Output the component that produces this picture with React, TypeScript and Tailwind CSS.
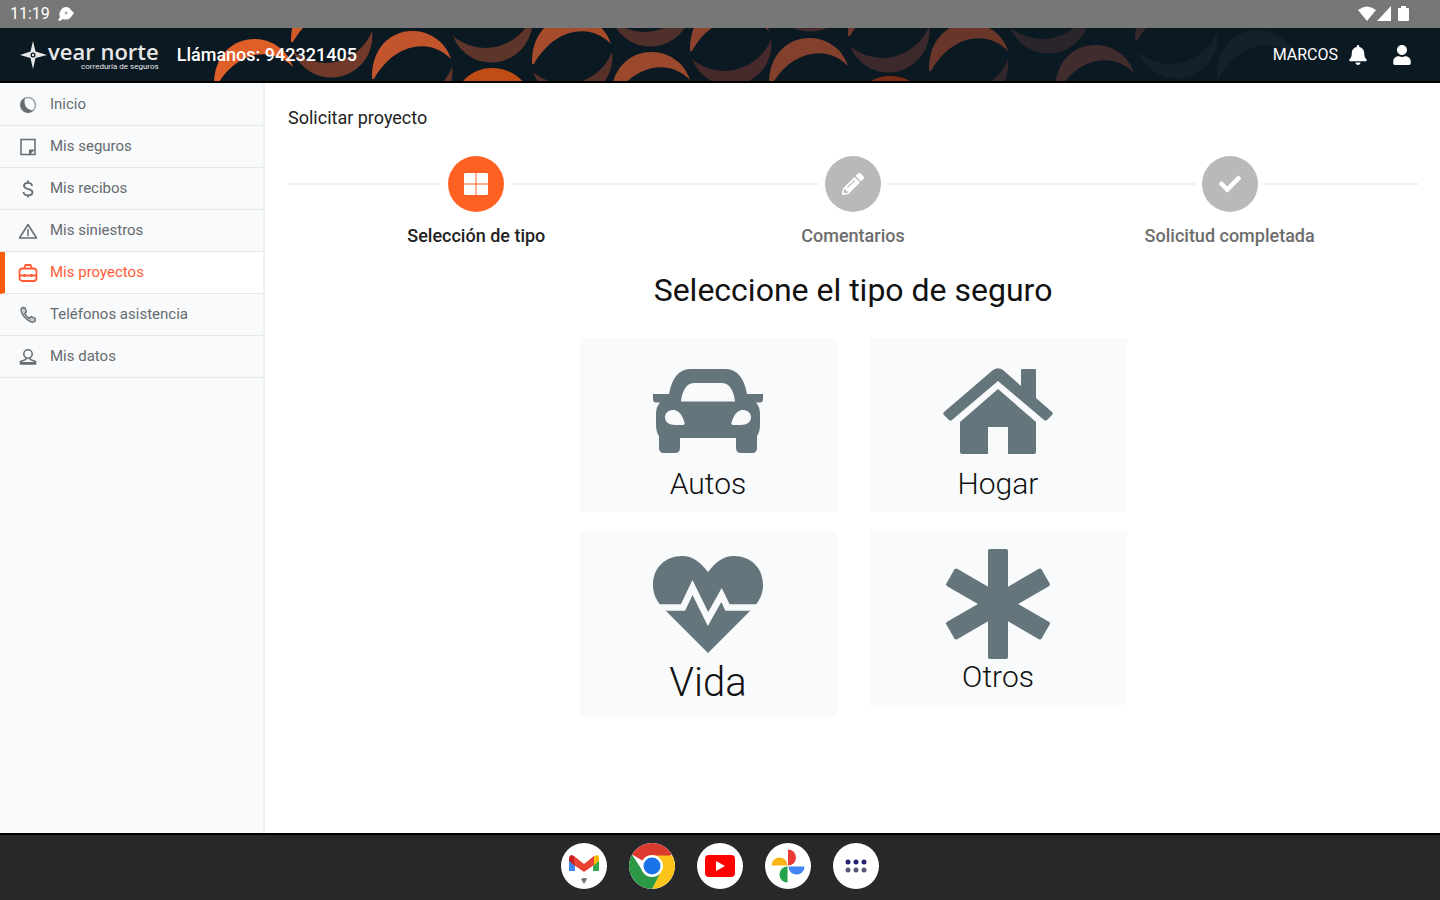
import React from 'react';
import { FaBell, FaUser, FaPencilAlt, FaCheck } from 'react-icons/fa';

interface MenuItem {
  label: string;
  icon: React.ReactNode;
  active?: boolean;
}

interface Step {
  label: string;
  icon: React.ReactNode;
  active?: boolean;
}

interface InsuranceType {
  label: string;
  icon: React.ReactNode;
  large?: boolean;
}

const LineIcon: React.FC<{ children: React.ReactNode }> = ({ children }) => (
  <svg
    viewBox="0 0 20 20"
    className="h-5 w-5 shrink-0"
    fill="none"
    stroke="currentColor"
    strokeWidth="1.5"
    aria-hidden="true"
  >
    {children}
  </svg>
);

const menuItems: MenuItem[] = [
  {
    label: 'Inicio',
    icon: (
      <LineIcon>
        <circle cx="10" cy="10" r="7.5" opacity="0.6" />
        <path d="M7 3C2 5 1 11 4.500 15C7 18.500 12 18.500 15 15.500C9 15 5 10 7 3Z" fill="currentColor" stroke="none" />
      </LineIcon>
    ),
  },
  {
    label: 'Mis seguros',
    icon: (
      <LineIcon>
        <path d="M3 2.500H17V17.500H3Z" />
        <path d="M11 17.500V12.500H17L12 17.500Z" fill="currentColor" stroke="none" />
      </LineIcon>
    ),
  },
  {
    label: 'Mis recibos',
    icon: (
      <LineIcon>
        <path d="M14 7C14 5 12.300 3.800 10 3.800S6 5 6 6.800C6 8.900 8 9.300 10 10S14.500 11.300 14.500 13.300S12.300 16.300 10 16.300S5.500 15 5.500 13M10 1.500V3.800M10 16.300V18.500" strokeWidth="1.800" />
      </LineIcon>
    ),
  },
  {
    label: 'Mis siniestros',
    icon: (
      <LineIcon>
        <path d="M10 3.500L18.500 17H1.500Z" strokeLinejoin="round" />
        <path d="M10 8V15.200" />
      </LineIcon>
    ),
  },
  {
    label: 'Mis proyectos',
    active: true,
    icon: (
      <LineIcon>
        <rect x="1.500" y="5.500" width="17" height="12.500" rx="3" strokeWidth="1.800" />
        <path d="M6 5.500L7.500 2H12.500L14 5.500M1.500 12.500H18.500M6.500 11V14M13.500 11V14" strokeWidth="1.800" />
      </LineIcon>
    ),
  },
  {
    label: 'Teléfonos asistencia',
    icon: (
      <LineIcon>
        <path d="M4.500 2.500L7 2.800L8.500 6.800L6.800 8.500C7.800 10.500 9 12 11.500 13.300L13.300 11.500L17.300 13.300L17 16.500C15 18 11.500 16.500 8.500 14C5 11 2.500 6.500 3 4Z" strokeWidth="1.300" fill="currentColor" fillOpacity="0.35" />
      </LineIcon>
    ),
  },
  {
    label: 'Mis datos',
    icon: (
      <LineIcon>
        <circle cx="10" cy="7" r="4.200" />
        <path d="M7.800 10.500V12.500L2.500 14.500V17H17.500V14.500L12.200 12.500V10.500M3 15.800H17" />
      </LineIcon>
    ),
  },
];

const steps: Step[] = [
  {
    label: 'Selección de tipo',
    active: true,
    icon: (
      <svg viewBox="0 0 24 22" className="h-[22px] w-6" fill="currentColor" aria-hidden="true">
        <path d="M1 0H11.500V10.500H0V1ZM12.500 0H23L24 1V10.500H12.500ZM0 11.500H11.500V22H1L0 21ZM12.500 11.500H24V21L23 22H12.500Z" />
      </svg>
    ),
  },
  { label: 'Comentarios', icon: <FaPencilAlt className="h-[22px] w-[22px]" /> },
  { label: 'Solicitud completada', icon: <FaCheck className="h-[22px] w-[22px]" /> },
];

const BigIcon: React.FC<{ children: React.ReactNode }> = ({ children }) => (
  <svg viewBox="0 0 110 110" className="h-[110px] w-[110px]" fill="currentColor" aria-hidden="true">
    {children}
  </svg>
);

const insuranceTypes: InsuranceType[] = [
  {
    label: 'Autos',
    icon: (
      <BigIcon>
        <path
          fillRule="evenodd"
          d="M37 13H73C84 13 91 22 94 38H110V43Q110 46.500 107 46.500H103Q107 51 107 58V69Q107 76 104 80V92Q104 97 99 97H88Q83 97 83 92V82H27V92Q27 97 22 97H11Q6 97 6 92V80Q3 76 3 69V58Q3 51 7 46.500H3Q0 46.500 0 43V38H16C19 22 26 13 37 13ZM41 27C33 27 29 36 28 45.500H82C81 36 77 27 69 27ZM20 54C14.500 54 12 58 12 61.500C12 66 16 69 22 69H30C33 69 31 64 29 60.500C27 56.500 24 54 20 54ZM90 54C86 54 83 56.500 81 60.500C79 64 77 69 80 69H88C94 69 98 66 98 61.500C98 58 95.500 54 90 54Z"
        />
      </BigIcon>
    ),
  },
  {
    label: 'Hogar',
    icon: (
      <BigIcon>
        <path d="M50 14Q55 10.500 60 14L78 30V14Q78 13 79 13H92Q93 13 93 14V42L109 56Q110.500 57.500 109 59L104 64Q102.500 65 101 64L55 25L9 64Q7.500 65 6 64L1 59Q-0.500 57.500 1 56Z" />
        <path d="M55 33L93 66V96Q93 98 91 98H65V71H45V98H19Q17 98 17 96V66Z" />
      </BigIcon>
    ),
  },
  {
    label: 'Vida',
    large: true,
    icon: (
      <BigIcon>
        <path d="M55 104L9 58C2 50 0 43 0 36C0 19 12 7 29 7C40 7 47 13 55 23C63 13 70 7 81 7C98 7 110 19 110 36C110 43 108 50 101 58Z" />
        <path
          d="M-2 58.500H30L39.500 38.500L55 70L68.500 46L74.500 58.500H112"
          fill="none"
          stroke="#f8fafb"
          strokeWidth="6.500"
        />
      </BigIcon>
    ),
  },
  {
    label: 'Otros',
    icon: (
      <BigIcon>
        <rect x="45" y="0" width="20" height="110" rx="2" />
        <rect x="45" y="0" width="20" height="110" rx="2" transform="rotate(60 55 55)" />
        <rect x="45" y="0" width="20" height="110" rx="2" transform="rotate(-60 55 55)" />
      </BigIcon>
    ),
  },
];

// Left tip of every crescent in the header band, with its colour
const archesUp: [number, number, string][] = [
  [214, 60, '#df5f29'],
  [291, 15, '#d05a2a'],
  [372, 52, '#c2552c'],
  [452, 89, '#c04d14'],
  [532, 37, '#a54c2d'],
  [611, 73, '#9b482d'],
  [690, 24, '#8c422c'],
  [769, 59, '#83402c'],
  [848, 9, '#6f382b'],
  [850, 97, '#7a2c16'],
  [929, 44, '#6b362a'],
  [1055, 66, '#402c2d'],
  [1135, 14, '#35272b'],
  [1217, 51, '#14202a'],
];

const archesDown: [number, number, string][] = [
  [293, 24, '#70392a'],
  [373, 60, '#643429'],
  [453, 9, '#5e352b'],
  [533, 45, '#58302a'],
  [612, -7, '#50302b'],
  [692, 32, '#46292a'],
  [772, -22, '#402b2a'],
  [850, 19, '#3b292c'],
  [929, 52, '#33262a'],
  [1010, 0, '#29252b'],
  [1138, 25, '#14202a'],
];

const HeaderPattern = () => (
  <svg
    viewBox="0 0 1440 55"
    preserveAspectRatio="xMidYMid slice"
    className="absolute inset-0 h-full w-full"
    aria-hidden="true"
  >
    {archesDown.map(([x, y, color]) => (
      <path
        key={`down-${x}-${y}`}
        d="M0 0A41 41 0 0 0 79 -20A50 50 0 0 1 0 0Z"
        transform={`translate(${x} ${y})`}
        fill={color}
      />
    ))}
    {archesUp.map(([x, y, color]) => (
      <path
        key={`up-${x}-${y}`}
        d="M0 0C-1 -30 18 -49 42 -48C60 -47 74 -36 79 -20C58 -42 22 -36 2 0Z"
        transform={`translate(${x} ${y})`}
        fill={color}
      />
    ))}
  </svg>
);

const StatusBar = () => (
  <div className="flex h-7 items-center justify-between bg-[#777777] pl-2.5 pr-7 text-white">
    <div className="flex items-center gap-2">
      <span className="text-base leading-7">11:19</span>
      <svg viewBox="0 0 16 16" className="h-4 w-4" aria-hidden="true">
        <path d="M8 1C10 1 12 2 13 4L16 7L13 11C11 14 7 14 5 13L2 15L0 14L2 11C1 9 1 7 3 4C4 2 6 1 8 1Z" fill="#fff" />
        <circle cx="8" cy="7" r="1.500" fill="#aaa" />
      </svg>
    </div>
    <svg viewBox="0 0 54 16" className="h-4 w-[54px]" fill="currentColor" aria-hidden="true">
      <path d="M0 4Q9 -3 18 4L9 15Z" />
      <path d="M33 0V15H19Z" />
      <path d="M40 2H43V0H48V2H50Q51 2 51 3V14Q51 15 50 15H41Q40 15 40 14Z" />
    </svg>
  </div>
);

const Header = () => (
  <header className="relative z-10 flex h-[55px] items-center justify-between overflow-hidden border-b-2 border-black bg-[#0a1922] pl-5 pr-7 text-white">
    <HeaderPattern />
    <div className="relative flex items-center gap-[18px]">
      <a href="#inicio" className="flex items-center text-[#e8e8e8]">
        <svg viewBox="0 0 28 28" className="h-7 w-7" fill="currentColor" aria-hidden="true">
          <path d="M13 0L15.500 10.500L27 14L15.500 17L13 28L10.500 17L0 14L10.500 10.500Z" />
          <circle cx="13" cy="14" r="2.500" fill="#0a1922" />
          <circle cx="13" cy="14" r="1.200" />
        </svg>
        <span className="flex flex-col items-end">
          <span className="font-['Open_Sans',sans-serif] text-[22px] leading-6 font-semibold">vear norte</span>
          <span className="text-[8px] leading-2">correduría de seguros</span>
        </span>
      </a>
      <a href="tel:942321405" className="text-lg font-medium">
        Llámanos: 942321405
      </a>
    </div>
    <div className="relative flex items-center">
      <span className="text-base leading-6">MARCOS</span>
      <button type="button" aria-label="Notificaciones" className="ml-2.5">
        <FaBell className="h-5 w-5" />
      </button>
      <button type="button" aria-label="Mi cuenta" className="ml-6">
        <FaUser className="h-5 w-5" />
      </button>
    </div>
  </header>
);

const Sidebar = () => (
  <nav className="w-[265px] shrink-0 border-r-2 border-[#eff2f3] bg-[#f8fafc] pt-px">
    <ul>
      {menuItems.map((item) => (
        <li key={item.label}>
          <a
            href="#menu"
            className={`flex h-[42px] items-center gap-3 border-b border-b-[#e4e8ea] text-[15px] ${
              item.active
                ? 'border-l-5 border-l-[#ff5a0a] bg-white pl-[13px] text-[#ff5c35]'
                : 'pl-[18px] text-[#666b6e]'
            }`}
          >
            {item.icon}
            {item.label}
          </a>
        </li>
      ))}
    </ul>
  </nav>
);

const Stepper = () => (
  <ol className="mt-[26px] grid grid-cols-3">
    {steps.map((step) => (
      <li key={step.label} className="flex flex-col items-center">
        <div className="flex w-full items-center gap-[7px]">
          <span className="h-0.5 flex-1 bg-[#eeeeee]" />
          <span
            className={`flex h-14 w-14 items-center justify-center rounded-full text-white ${
              step.active ? 'bg-[#ff6123]' : 'bg-[#b9b9b9]'
            }`}
          >
            {step.icon}
          </span>
          <span className="h-0.5 flex-1 bg-[#eeeeee]" />
        </div>
        <span
          className={`mt-3 text-lg leading-6 font-medium ${
            step.active ? 'text-[#222222]' : 'text-[#6c6c6c]'
          }`}
        >
          {step.label}
        </span>
      </li>
    ))}
  </ol>
);

const dockCircle = 'flex h-[46px] w-[46px] items-center justify-center overflow-hidden rounded-full bg-white';

const Dock = () => (
  <footer className="flex h-[67px] items-center justify-center gap-[22px] border-t-2 border-black bg-[#26282a] pb-[3px]">
    <button type="button" aria-label="Gmail" className={dockCircle}>
      <svg viewBox="0 0 46 46" className="h-full w-full" aria-hidden="true">
        <path d="M8 15V28H14V19Z" fill="#4285f4" />
        <path d="M32 19V28H38V15Z" fill="#34a853" />
        <path d="M32 14L36 12Q38 12 38 15V18L32 23Z" fill="#fbbc04" />
        <path d="M8 16Q8 12 11 12L14 14V23L8 18Z" fill="#c5221f" />
        <path d="M13 13L23 21L33 13V22L23 29L13 22Z" fill="#ea4335" />
        <path d="M20 36L22 35H25L26 36L23 41Z" fill="#777" />
      </svg>
    </button>
    <button type="button" aria-label="Chrome" className={dockCircle}>
      <svg viewBox="0 0 46 46" className="h-full w-full" aria-hidden="true">
        <path d="M23 23L3 11.500A23 23 0 0 1 43 11.500Z" fill="#dc3a2e" />
        <path d="M23 12.500H43.500A23 23 0 0 1 23 46L32 28Z" fill="#fcc419" />
        <path d="M3 11.500L14 28.500L23 33L32 28.500L23 46A23 23 0 0 1 3 11.500Z" fill="#2b9845" />
        <circle cx="23" cy="23" r="11" fill="#fff" />
        <circle cx="23" cy="23" r="8.500" fill="#1a73e8" />
      </svg>
    </button>
    <button type="button" aria-label="YouTube" className={dockCircle}>
      <svg viewBox="0 0 46 46" className="h-full w-full" aria-hidden="true">
        <rect x="8" y="12" width="30" height="22" rx="4" fill="#ff0000" />
        <path d="M19 18L28 23L19 28Z" fill="#fff" />
      </svg>
    </button>
    <button type="button" aria-label="Fotos" className={dockCircle}>
      <svg viewBox="0 0 46 46" className="h-full w-full" aria-hidden="true">
        <path d="M23 6.500A8 8 0 0 1 23 22.500Z" fill="#ea3a35" />
        <path d="M39.500 23.500A8 8 0 0 1 23.500 23.500Z" fill="#4285f4" />
        <path d="M22.500 39.500A8 8 0 0 1 22.500 23.500Z" fill="#22a14a" />
        <path d="M6.500 22.500A8 8 0 0 1 22.500 22.500Z" fill="#fbb418" />
      </svg>
    </button>
    <button type="button" aria-label="Aplicaciones" className={dockCircle}>
      <svg viewBox="0 0 46 46" className="h-full w-full" aria-hidden="true">
        <g fill="#26246e">
          <circle cx="15" cy="19" r="2.500" />
          <circle cx="23" cy="19" r="2.500" />
          <circle cx="31" cy="19" r="2.500" />
        </g>
        <g fill="#555a78">
          <circle cx="15" cy="27" r="2.500" />
          <circle cx="23" cy="27" r="2.500" />
          <circle cx="31" cy="27" r="2.500" />
        </g>
      </svg>
    </button>
  </footer>
);

export default function App() {
  return (
    <div className="flex min-h-screen flex-col bg-white font-[Roboto,sans-serif] text-[#222222]">
      <StatusBar />
      <Header />
      <div className="flex flex-1">
        <Sidebar />
        <main className="flex-1 pt-[23px] pr-[22px] pb-6 pl-[23px]">
          <h1 className="text-lg leading-6">Solicitar proyecto</h1>
          <Stepper />
          <h2 className="mt-[22px] text-center text-[32px] leading-10 text-[#111111]">
            Seleccione el tipo de seguro
          </h2>
          <div className="mt-7 flex justify-center">
            <div className="grid grid-cols-[257px_257px] items-start gap-x-[33px] gap-y-[19px]">
              {insuranceTypes.map((type) => (
                <button
                  key={type.label}
                  type="button"
                  className="flex flex-col items-center bg-[#f8fafb] pt-[18px] pb-2.5 text-[#65757c]"
                >
                  {type.icon}
                  <span
                    className={`font-light text-[#111111] ${
                      type.large ? 'text-[40px] leading-12' : 'text-3xl leading-9'
                    }`}
                  >
                    {type.label}
                  </span>
                </button>
              ))}
            </div>
          </div>
        </main>
      </div>
      <Dock />
    </div>
  );
}
